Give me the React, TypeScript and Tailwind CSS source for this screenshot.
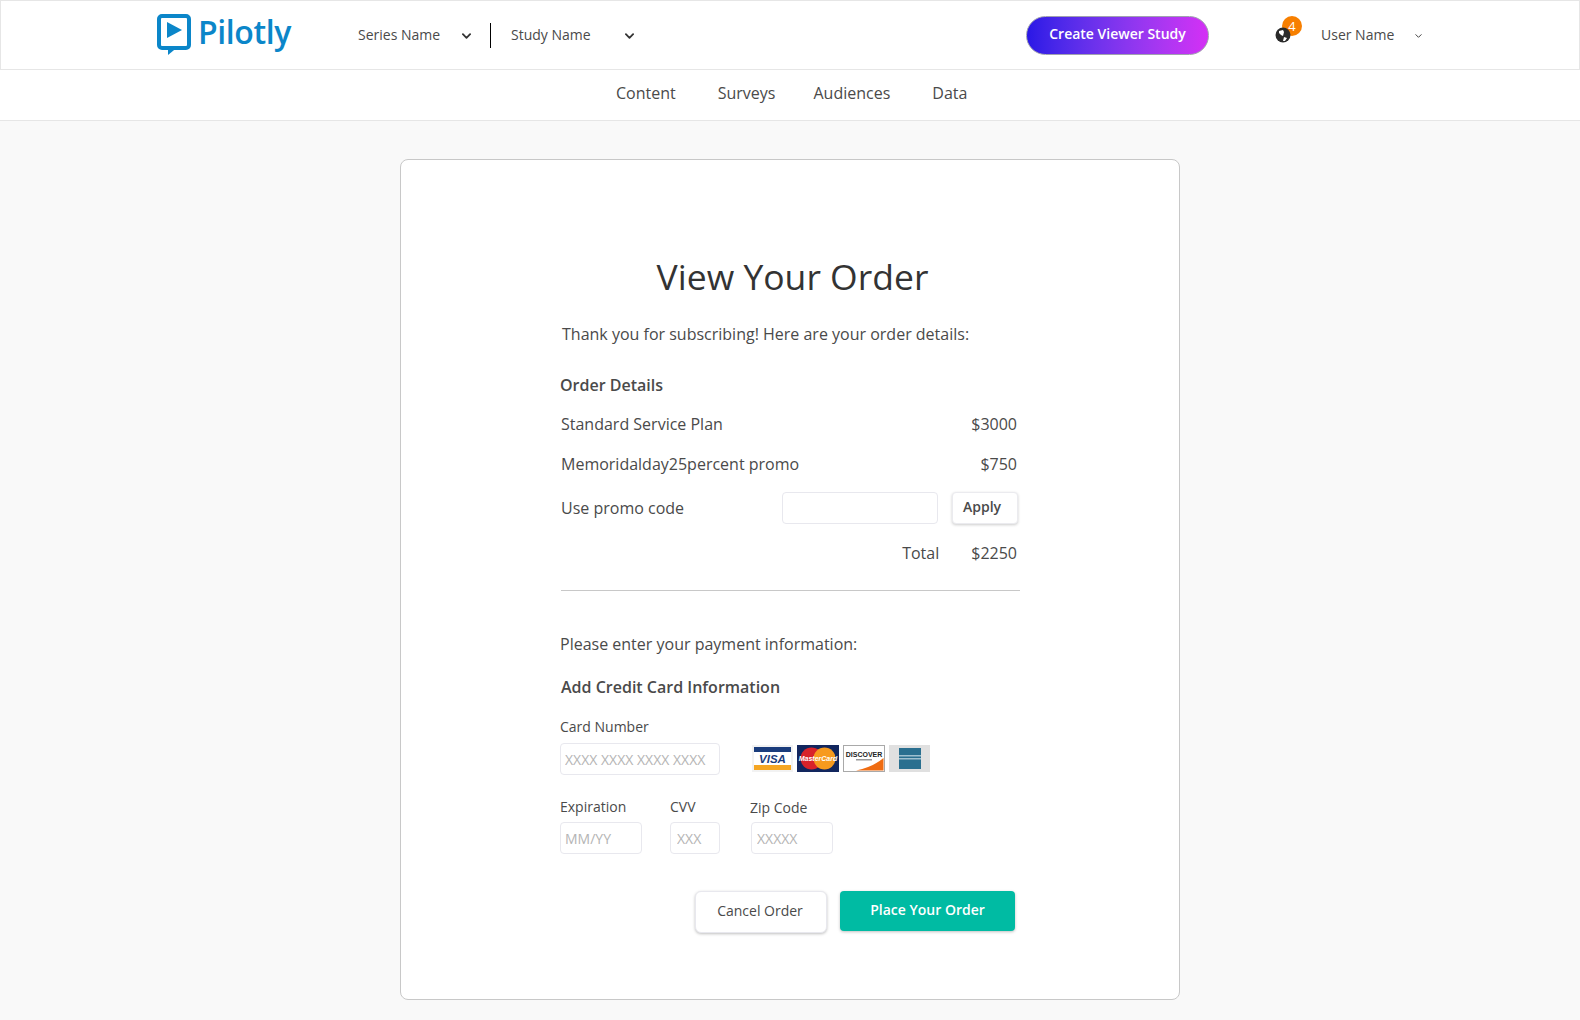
import React from "react";

function Chevron({ className }: { className: string }) {
  return (
    <svg viewBox="0 0 10 6" className={className} fill="none" stroke="currentColor" strokeLinecap="round" strokeLinejoin="round">
      <path d="M1 1l4 4 4-4" />
    </svg>
  );
}

function Logo() {
  return (
    <svg viewBox="0 0 36 42" className="w-[36px] h-[42px] shrink-0 -mt-[2px]">
      <path d="M6 3h24a3 3 0 0 1 3 3v26a3 3 0 0 1-3 3H6a3 3 0 0 1-3-3V6a3 3 0 0 1 3-3z" fill="none" stroke="#0b86c9" strokeWidth="4" />
      <path d="M12 33h11l-11 9z" fill="#0b86c9" />
      <path d="M11 9l15 8-15 8z" fill="#0b86c9" />
    </svg>
  );
}

function Cards() {
  return (
    <div className="flex gap-[4px] ml-[32px] mt-[2px]">
      <svg viewBox="0 0 41 27" className="w-[41px] h-[27px]">
        <rect width="41" height="27" fill="#f2f2f2" />
        <rect x="2" y="2" width="37" height="5" fill="#1a3c7c" />
        <rect x="2" y="20" width="37" height="5" fill="#f5a623" />
        <rect x="2" y="7" width="37" height="13" fill="#fff" />
        <text x="20.500" y="18" textAnchor="middle" fontSize="11.500" fontWeight="700" fontStyle="italic" fill="#1a3c7c" fontFamily="Liberation Sans, sans-serif">VISA</text>
      </svg>
      <svg viewBox="0 0 42 27" className="w-[42px] h-[27px]">
        <rect width="42" height="27" fill="#12265e" />
        <circle cx="14.500" cy="13.500" r="11" fill="#d8232a" />
        <circle cx="27.500" cy="13.500" r="11" fill="#f79a1e" />
        <text x="21" y="16" textAnchor="middle" fontSize="7" fontWeight="700" fontStyle="italic" fill="#fff" fontFamily="Liberation Sans, sans-serif">MasterCard</text>
      </svg>
      <svg viewBox="0 0 42 27" className="w-[42px] h-[27px]">
        <rect x="0.500" y="0.500" width="41" height="26" fill="#fff" stroke="#a9a9a9" />
        <path d="M13 25.500Q30 22 40.500 13v12.500z" fill="#ef6c12" />
        <text x="21" y="11.500" textAnchor="middle" fontSize="7" fontWeight="700" fill="#222" fontFamily="Liberation Sans, sans-serif">DISCOVER</text>
        <rect x="13" y="14" width="16" height="1.500" fill="#999" />
      </svg>
      <svg viewBox="0 0 41 27" className="w-[41px] h-[27px]">
        <rect width="41" height="27" fill="#e0e0e0" />
        <rect x="10" y="3" width="22" height="21" fill="#2a6f8f" />
        <rect x="10" y="10" width="22" height="1.500" fill="#9fc0cf" />
        <rect x="10" y="13" width="22" height="1.500" fill="#9fc0cf" />
      </svg>
    </div>
  );
}

const field = "h-[32px] bg-white border border-[#e8e8ee] rounded-[4px] px-[4px] text-[14px] text-[#333] placeholder:text-[#b4b4b4] outline-none";

export default function App() {
  return (
    <div className="min-h-[1020px] bg-[#f9f9f9] text-[#4a4a4a] font-['Open_Sans',sans-serif]">
      <header className="h-[70px] bg-white border border-[#e6e6e6] flex items-center pl-[155px]">
        <Logo />
        <span className="ml-[6px] text-[32px] leading-[40px] font-semibold tracking-[-0.4px] text-[#0b86c9] -mt-[7px] w-[96px]">Pilotly</span>
        <div className="ml-[64px] flex items-center text-[14px]">
          <span className="w-[104px] -mt-[2px]">Series Name</span>
          <Chevron className="w-[9px] h-[6px] stroke-[2] text-[#333] mt-[2px]" />
          <div className="w-px h-[25px] bg-black ml-[19px] mr-[20px]" />
          <span className="w-[114px] -mt-[2px]">Study Name</span>
          <Chevron className="w-[9px] h-[6px] stroke-[2] text-[#333] mt-[2px]" />
        </div>
        <button className="ml-[392px] w-[183px] h-[39px] rounded-full border border-[#a0a0b0] bg-gradient-to-r from-[#2a17e6] to-[#d42ff5] text-white text-[14px] font-semibold pb-[3px]">
          Create Viewer Study
        </button>
        <div className="relative ml-[66px] w-[16px] h-[16px] -mt-[1px]">
          <span className="absolute -top-[11px] left-[7px] w-[20px] h-[20px] rounded-full bg-[#f77f00] text-white text-[13px] leading-[20px] text-center">4</span>
          <svg viewBox="0 0 16 16" className="relative w-[16px] h-[16px]">
            <circle cx="8" cy="8" r="7.500" fill="#2b2b2b" />
            <path d="M4 4l4-1 1 2-1 4-2-1-2-2zM9 10l3 1-2 3h-2z" fill="#fff" />
          </svg>
        </div>
        <span className="ml-[30px] text-[14px] w-[94px] -mt-[2px]">User Name</span>
        <Chevron className="w-[7px] h-[4px] stroke-[1.5] text-[#444] mt-[1px]" />
      </header>
      <nav className="h-[51px] bg-white border-b border-[#e6e6e6] flex items-center text-[16px] pl-[616px] pb-[5px]">
        <span>Content</span>
        <span className="ml-[42px]">Surveys</span>
        <span className="ml-[38px]">Audiences</span>
        <span className="ml-[42px]">Data</span>
      </nav>
      <main className="w-[780px] h-[841px] mx-auto mt-[38px] bg-white border border-[#c8c8c8] rounded-[8px] pt-[91px] pl-[159px]">
        <h1 className="w-[469px] text-center text-[35.5px] leading-[50px] text-[#333] -ml-[2px]">View Your Order</h1>
        <p className="mt-[21px] ml-[2px] text-[16px] leading-[24px]">Thank you for subscribing! Here are your order details:</p>
        <h2 className="mt-[27px] text-[16px] leading-[24px] font-semibold">Order Details</h2>
        <div className="w-[459px] ml-[1px] text-[16px]">
          <div className="mt-[15px] flex justify-between leading-[24px] pr-[3px]"><span>Standard Service Plan</span><span>$3000</span></div>
          <div className="mt-[16px] flex justify-between leading-[24px] pr-[3px]"><span>Memoridalday25percent promo</span><span>$750</span></div>
          <div className="mt-[16px] flex items-center leading-[24px]">
            <span className="w-[221px]">Use promo code</span>
            <input className={`${field} w-[156px]`} />
            <button className="ml-[14px] w-[66px] h-[32px] bg-white border border-[#ebebef] rounded-[4px] shadow-[0_1px_3px_rgba(0,0,0,0.2)] text-[14px] font-semibold text-left pl-[10px] pb-[2px]">Apply</button>
          </div>
          <div className="mt-[17px] flex justify-end leading-[24px] pr-[3px]"><span className="mr-[32px]">Total</span><span>$2250</span></div>
          <div className="mt-[25px] h-px bg-[#c8c8c8]" />
        </div>
        <p className="mt-[41px] text-[16px] leading-[24px]">Please enter your payment information:</p>
        <h2 className="mt-[19px] ml-[1px] text-[16px] leading-[24px] font-semibold">Add Credit Card Information</h2>
        <label className="block mt-[18px] text-[14px] leading-[20px]">Card Number</label>
        <div className="flex items-start mt-[6px]">
          <input className={`${field} w-[160px]`} placeholder="XXXX XXXX XXXX XXXX" />
          <Cards />
        </div>
        <div className="flex mt-[22px] text-[14px] leading-[20px]">
          <div className="w-[110px]">
            <label className="block">Expiration</label>
            <input className={`${field} w-[82px] mt-[5px]`} placeholder="MM/YY" />
          </div>
          <div className="w-[80px]">
            <label className="block">CVV</label>
            <input className={`${field} w-[50px] mt-[5px] pl-[6px]`} placeholder="XXX" />
          </div>
          <div>
            <label className="block mt-[1px]">Zip Code</label>
            <input className={`${field} w-[82px] mt-[4px] ml-[1px] pl-[5px]`} placeholder="XXXXX" />
          </div>
        </div>
        <div className="flex mt-[37px] ml-[135px] gap-[13px] text-[14px]">
          <button className="w-[132px] h-[42px] bg-white border border-[#e8e8ee] rounded-[6px] shadow-[0_1px_3px_rgba(0,0,0,0.25)] pb-[3px] pr-[2px]">Cancel Order</button>
          <button className="w-[175px] h-[40px] bg-[#00bba3] rounded-[4px] shadow-[0_1px_3px_rgba(0,0,0,0.25)] text-white font-semibold pb-[3px]">Place Your Order</button>
        </div>
      </main>
    </div>
  );
}
